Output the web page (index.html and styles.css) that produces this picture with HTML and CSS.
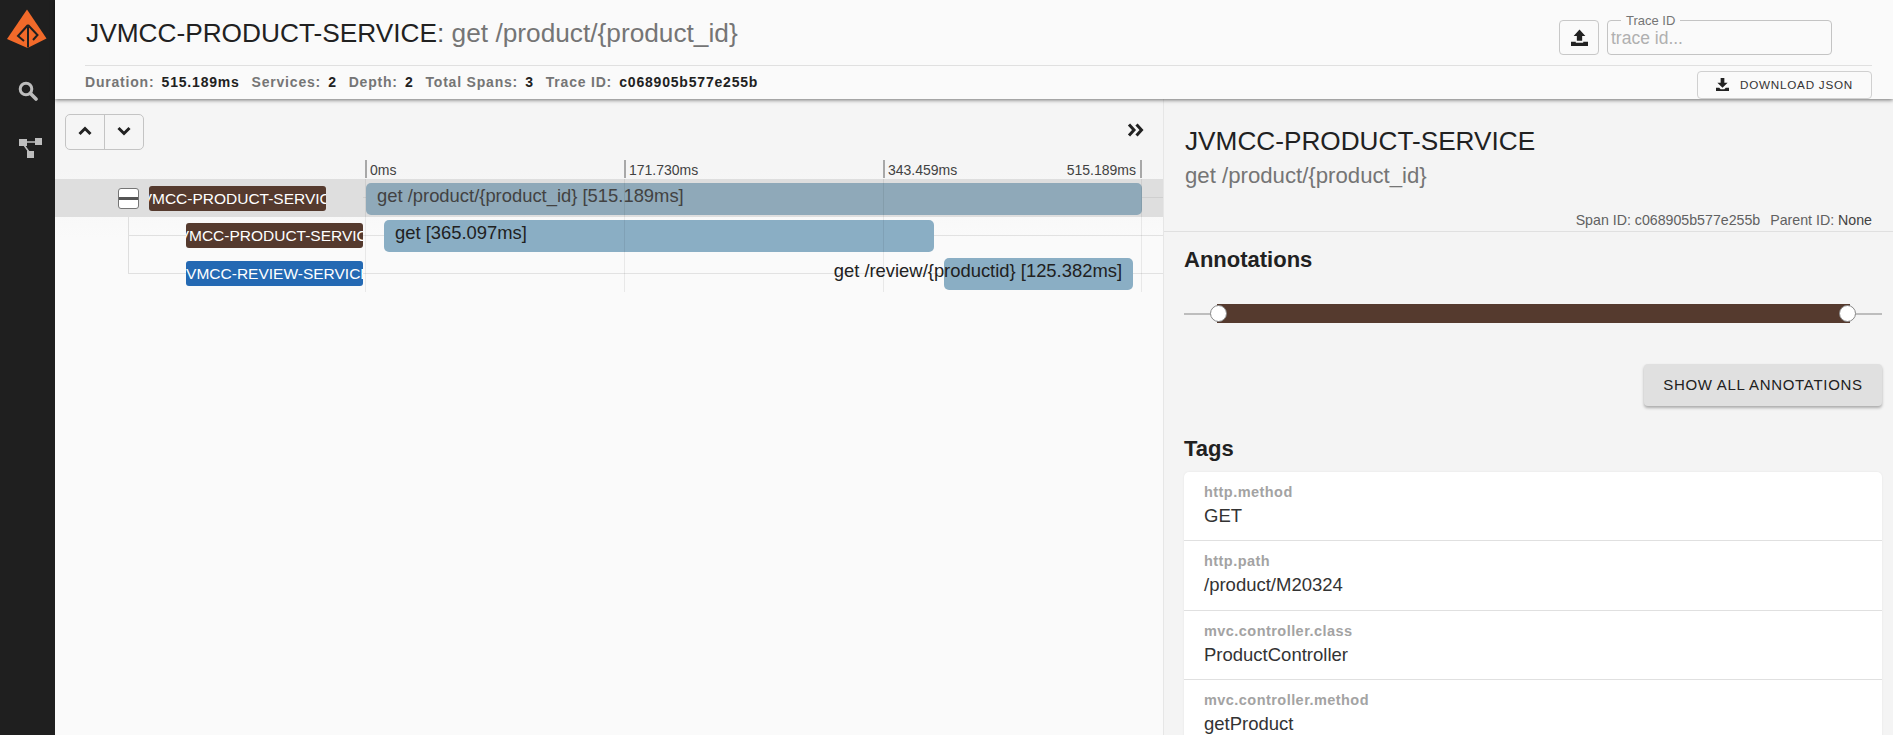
FILE: index.html
```html
<!DOCTYPE html>
<html lang="en">
<head>
<meta charset="utf-8">
<title>Zipkin trace</title>
<link rel="stylesheet" href="styles.css">
</head>
<body>
<div class="app">
  <nav class="sidebar">
    <svg class="logo" viewBox="0 0 40 40" width="40" height="40">
      <path fill="#f26a2a" d="M20 0.500 L39.500 29.500 L20.500 39 L0 30 Z"/>
      <path fill="none" stroke="#1f1f1f" stroke-width="2" d="M21 18 V38.500 M21 16 L11 27 L17 32 M21 16 L30.500 26 L26 31"/>
    </svg>
    <svg class="nav-icon nav-search" viewBox="0 0 20 20" width="20" height="20">
      <circle cx="8" cy="8" r="5.800" fill="none" stroke="#bdbdbd" stroke-width="3"/>
      <path d="M12.500 12.500 L18 18" stroke="#bdbdbd" stroke-width="3.600" stroke-linecap="round"/>
    </svg>
    <svg class="nav-icon nav-deps" viewBox="0 0 24 20" width="24" height="20">
      <path fill="#bdbdbd" d="M0 1h8v7H0zM16 0h7v7h-7zM8 13h7v7H8z"/>
      <path d="M7 4h9M5 7l5 7" stroke="#bdbdbd" stroke-width="1.500" fill="none"/>
    </svg>
  </nav>
  <div class="content">
    <header class="header">
      <div class="header-top">
        <h1 class="trace-title">JVMCC-PRODUCT-SERVICE<span class="colon">:</span> <span class="muted">get /product/{product_id}</span></h1>
        <div class="trace-tools">
          <button class="upload-btn" type="button" aria-label="Upload">
            <svg viewBox="0 0 16 16" width="17" height="17"><path fill="#222" d="M8 0.500 L13.500 6.500 H10.500 V11 H5.500 V6.500 H2.500 Z M0 12 H4.500 V13 H11.500 V12 H16 V16 H0 Z"/></svg>
          </button>
          <fieldset class="trace-input">
            <legend>Trace ID</legend>
            <span class="placeholder">trace id...</span>
          </fieldset>
        </div>
      </div>
      <div class="header-bottom">
        <div class="stats">
          <span class="stat-label">Duration:</span><b>515.189ms</b>
          <span class="stat-label">Services:</span><b>2</b>
          <span class="stat-label">Depth:</span><b>2</b>
          <span class="stat-label">Total Spans:</span><b>3</b>
          <span class="stat-label">Trace ID:</span><b>c068905b577e255b</b>
        </div>
        <button class="download-btn" type="button">
          <svg viewBox="0 0 14 14" width="13" height="13"><path fill="#222" d="M5 0 H9 V5 H12.500 L7 10.500 L1.500 5 H5 Z M0 10.500 H3.500 L5 12 H9 L10.500 10.500 H14 V14 H0 Z"/></svg>
          <span>DOWNLOAD JSON</span>
        </button>
      </div>
    </header>
    <main class="main">
      <section class="trace">
        <div class="toolbar">
          <div class="btn-group">
            <button class="group-btn" type="button" aria-label="Up">
              <svg viewBox="0 0 14 10" width="14" height="10"><path d="M1.500 8 L7 2.500 L12.500 8" fill="none" stroke="#222" stroke-width="3"/></svg>
            </button>
            <button class="group-btn" type="button" aria-label="Down">
              <svg viewBox="0 0 14 10" width="14" height="10"><path d="M1.500 2 L7 7.500 L12.500 2" fill="none" stroke="#222" stroke-width="3"/></svg>
            </button>
          </div>
          <svg class="collapse-icon" viewBox="0 0 17 14" width="17" height="14"><path d="M2 1.500 L7 7 L2 12.500 M9.500 1.500 L14.500 7 L9.500 12.500" fill="none" stroke="#222" stroke-width="3"/></svg>
        </div>
        <div class="ticks">
          <span class="tick" style="left:310px">0ms</span>
          <span class="tick" style="left:569px">171.730ms</span>
          <span class="tick" style="left:828px">343.459ms</span>
          <span class="tick tick-end">515.189ms</span>
        </div>
        <div class="rows">
          <i class="grid-line" style="left:310px"></i>
          <i class="grid-line" style="left:569px"></i>
          <i class="grid-line" style="left:828px"></i>
          <i class="grid-line" style="left:1086px"></i>
          <i class="tree-v"></i>
          <div class="row row-selected">
            <span class="toggle"><i></i></span>
            <span class="service service-root brown"><span>JVMCC-PRODUCT-SERVICE</span></span>
            <span class="bar bar-dark" style="left:311px;width:776px">get /product/{product_id} [515.189ms]</span>
          </div>
          <div class="row">
            <i class="tree-h"></i>
            <span class="service brown"><span>JVMCC-PRODUCT-SERVICE</span></span>
            <span class="bar" style="left:329px;width:550px">get [365.097ms]</span>
          </div>
          <div class="row">
            <i class="tree-h"></i>
            <span class="service blue"><span>JVMCC-REVIEW-SERVICE</span></span>
            <span class="bar bar-flip" style="left:889px;width:189px"><span>get /review/{productid} [125.382ms]</span></span>
          </div>
        </div>
      </section>
      <aside class="detail">
        <div class="detail-head">
          <h2 class="detail-title">JVMCC-PRODUCT-SERVICE</h2>
          <div class="detail-sub">get /product/{product_id}</div>
          <div class="detail-ids">
            <span>Span ID: c068905b577e255b</span>
            <span>Parent ID: <span class="dark">None</span></span>
          </div>
        </div>
        <div class="detail-body">
          <h3 class="section-title">Annotations</h3>
          <div class="slider">
            <div class="slider-fill"></div>
            <i class="thumb thumb-left"></i>
            <i class="thumb thumb-right"></i>
          </div>
          <div class="actions"><button class="show-btn" type="button">SHOW ALL ANNOTATIONS</button></div>
          <h3 class="section-title tags-title">Tags</h3>
          <div class="tags">
            <div class="tag"><div class="tag-key">http.method</div><div class="tag-value">GET</div></div>
            <div class="tag"><div class="tag-key">http.path</div><div class="tag-value">/product/M20324</div></div>
            <div class="tag"><div class="tag-key">mvc.controller.class</div><div class="tag-value">ProductController</div></div>
            <div class="tag"><div class="tag-key">mvc.controller.method</div><div class="tag-value">getProduct</div></div>
          </div>
        </div>
      </aside>
    </main>
  </div>
</div>
</body>
</html>
```
FILE: styles.css
```css
* { box-sizing: border-box; }
html, body { margin: 0; height: 100%; overflow: hidden; }
body { font-family: "Liberation Sans", Arial, sans-serif; color: #212121; background: #f5f5f5; }
button { font-family: inherit; cursor: pointer; }

.app { display: flex; height: 735px; overflow: hidden; }

.sidebar { width: 55px; flex: none; background: #1f1f1f; display: flex; flex-direction: column; align-items: center; padding-top: 9px; }
.logo { margin-left: -1px; }
.nav-search { margin-top: 32px; }
.nav-deps { margin-top: 37px; margin-left: 6px; }

.content { flex: 1; min-width: 0; display: flex; flex-direction: column; }

.header { height: 99px; flex: none; background: #fafafa; padding: 0 21px 0 30px; box-shadow: 0 1px 4px rgba(0,0,0,.55); position: relative; z-index: 2; }
.header-top { height: 66px; display: flex; justify-content: space-between; border-bottom: 1px solid #e0e0e0; }
.trace-title { margin: 17px 0 0 1px; font-size: 26.250px; font-weight: 400; line-height: 32px; white-space: nowrap; color: #212121; }
.colon { color: #555; }
.muted { color: #757575; }
.trace-tools { display: flex; gap: 8px; padding: 14px 40px 0 0; align-items: flex-start; }
.upload-btn { width: 40px; height: 35px; margin-top: 6px; border: 1px solid #c8c8c8; border-radius: 4px; background: #fafafa; padding: 0; display: flex; align-items: center; justify-content: center; }
.trace-input { width: 225px; height: 41px; margin: 0; padding: 0 0 0 3px; border: 1px solid #c4c4c4; border-radius: 4px; display: block; }
.trace-input legend { font-size: 13px; color: #757575; padding: 0 5px; margin-left: 10px; line-height: 13px; }
.placeholder { font-size: 17.500px; color: #b0b0b0; line-height: 26px; display: block; margin-top: -2px; }

.header-bottom { display: flex; justify-content: space-between; align-items: flex-start; padding-top: 5px; }
.stats { font-size: 14px; font-weight: 700; letter-spacing: .8px; color: #757575; line-height: 16px; padding-top: 3px; white-space: nowrap; }
.stats b { color: #212121; margin: 0 7.200px 0 7.200px; }
.download-btn { width: 175px; height: 28px; border: 1px solid #d0d0d0; border-radius: 4px; background: #fafafa; font-size: 11.700px; letter-spacing: .75px; color: #333; display: flex; align-items: center; gap: 11px; padding: 0 0 2px 18px; }

.main { flex: 1; display: flex; min-height: 0; }

.trace { width: 1109px; flex: none; background: linear-gradient(#f5f5f5 0, #f5f5f5 70px, #fafafa 140px); border-right: 1px solid #e6e6e6; display: flex; flex-direction: column; }

.toolbar { height: 51px; flex: none; display: flex; justify-content: space-between; align-items: flex-start; padding: 15px 19px 0 10px; }
.btn-group { display: flex; width: 79px; height: 36px; border: 1px solid #c4c4c4; border-radius: 5px; }
.group-btn { flex: 1; border: 0; background: transparent; padding: 0 0 2px; display: flex; align-items: center; justify-content: center; }
.group-btn + .group-btn { border-left: 1px solid #c4c4c4; }
.collapse-icon { margin-top: 9px; }

.ticks { position: relative; height: 29px; flex: none; }
.tick { position: absolute; top: 10px; height: 18px; padding-left: 3px; border-left: 2px solid #a8a8a8; font-size: 14px; line-height: 20px; color: #424242; white-space: nowrap; }
.tick-end { right: 21px; padding: 0 4px 0 0; border-left: 0; border-right: 2px solid #a8a8a8; }

.rows { position: relative; flex: none; }
.grid-line { position: absolute; top: 0; height: 113px; width: 1px; background: rgba(0,0,0,.07); z-index: 2; }
.tree-v { position: absolute; left: 73px; top: 38px; width: 1px; height: 56px; background: #dedede; }
.row { position: relative; height: 37.500px; }
.row::after { content: ""; position: absolute; left: 308px; right: 0; top: 18px; height: 1px; background: #e2e2e2; }
.row-selected { background: #dedede; height: 38px; }
.row-selected::after { background: #cfcfcf; }
.tree-h { position: absolute; left: 73px; width: 58px; top: 18px; height: 1px; background: #e0e0e0; }

.toggle { position: absolute; left: 63px; top: 9px; width: 21px; height: 21px; border: 1px solid #757575; border-radius: 3px; background: #fff; }
.toggle i { position: absolute; left: 0; right: 0; top: 8px; height: 3px; background: #555; }

.service { position: absolute; left: 131px; top: 6px; width: 177px; height: 25px; border-radius: 3px; color: #fff; font-size: 15.500px; line-height: 25px; overflow: hidden; display: flex; justify-content: center; white-space: nowrap; z-index: 3; }
.service-root { left: 94px; top: 7px; }
.brown { background: #553a2e; }
.blue { background: #2469b3; }

.bar { position: absolute; top: 3px; height: 32px; background: #8aaec4; border-radius: 5px; padding-left: 11px; font-size: 18.400px; line-height: 25px; color: #212121; white-space: nowrap; z-index: 1; }
.row-selected .bar { top: 4px; background: #8fa9b9; color: #424242; }
.bar-flip { display: flex; justify-content: flex-end; padding: 0 11px 0 0; }
.bar-flip span { flex: none; }

.detail { flex: 1; min-width: 0; background: #f4f4f4; display: flex; flex-direction: column; }
.detail-head { height: 133px; flex: none; padding: 24px 21px 0 21px; border-bottom: 1px solid #e0e0e0; }
.detail-title { margin: 0; font-size: 26.200px; font-weight: 400; line-height: 36px; color: #212121; }
.detail-sub { font-size: 22.200px; line-height: 34px; color: #757575; }
.detail-ids { display: flex; justify-content: flex-end; gap: 10px; margin-top: 18px; font-size: 14.200px; line-height: 18px; color: #616161; }
.dark { color: #424242; }

.detail-body { padding: 0 11px 0 20px; }
.section-title { margin: 0; font-size: 22px; font-weight: 700; line-height: 26px; color: #212121; }
.detail-body > .section-title:first-child { margin-top: 15px; }

.slider { position: relative; height: 2px; margin: 40px 0 0; background: #bdbdbd; }
.slider-fill { position: absolute; left: 33px; right: 32px; top: -9px; height: 19px; background: #553a2e; }
.thumb { position: absolute; top: -8px; width: 17px; height: 17px; border-radius: 50%; background: #fff; border: 1px solid #888; }
.thumb-left { left: 26px; }
.thumb-right { right: 26px; }

.actions { display: flex; justify-content: flex-end; margin-top: 49px; }
.show-btn { width: 238px; height: 42px; border: 0; border-radius: 4px; background: #e0e0e0; box-shadow: 0 2px 3px rgba(0,0,0,.3); font-size: 15px; letter-spacing: .7px; color: #212121; padding: 0 0 2px; }

.tags-title { margin-top: 30px; }
.tags { margin-top: 10px; background: #fff; border-radius: 5px; box-shadow: 0 0 2px rgba(0,0,0,.08); }
.tag { height: 69.300px; padding: 10px 20px 0; border-bottom: 1px solid #e0e0e0; }
.tag-key { font-size: 14.500px; font-weight: 700; letter-spacing: .45px; line-height: 20px; color: #a3a3a3; }
.tag-value { font-size: 18.500px; line-height: 28px; color: #333; }
```
